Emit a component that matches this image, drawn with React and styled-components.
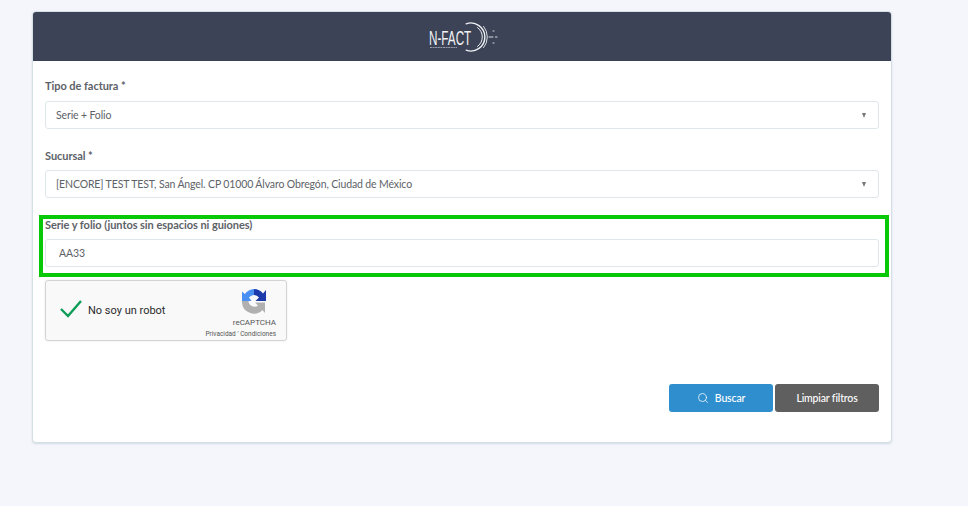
import React from "react";
import styled, { createGlobalStyle } from "styled-components";
import { Search } from "lucide-react";

const GlobalStyle = createGlobalStyle`
  html, body {
    margin: 0;
    padding: 0;
    height: 100%;
    background: #f5f6fb;
    font-family: "Lato", "Liberation Sans", sans-serif;
  }
`;

const Page = styled.div`
  width: 968px;
  height: 506px;
  padding: 11px 0 0 32px;
  box-sizing: border-box;
  overflow: hidden;
`;

const Card = styled.div`
  width: 860px;
  height: 432px;
  box-sizing: border-box;
  background: #fff;
  border: 1px solid #d5dfe6;
  border-radius: 4px;
  box-shadow: 0 1px 2px rgba(140, 170, 180, 0.35);
  overflow: hidden;
`;

const Header = styled.div`
  height: 49px;
  background: #3c4356;
  display: flex;
  align-items: center;
  justify-content: center;
`;

const Logo = styled.div`
  position: relative;
  width: 72px;
  height: 36px;
  margin-left: 3px;
`;

const LogoText = styled.span`
  position: absolute;
  left: 1px;
  top: 11px;
  color: #f1f2f4;
  font-family: "Liberation Sans", sans-serif;
  font-size: 19.5px;
  line-height: 16px;
  transform: scaleX(0.6);
  transform-origin: left center;
  white-space: nowrap;
`;

const LogoArcs = styled.svg`
  position: absolute;
  left: 0;
  top: 0;
`;

const Body = styled.div`
  padding: 17px 12px 0;
`;

const Field = styled.div`
  position: relative;
  margin-bottom: ${(p) => p.$gap}px;
`;

const Label = styled.div`
  color: #5d6268;
  font-size: 11px;
  font-weight: 700;
  line-height: 16px;
  letter-spacing: -0.05px;
  margin-bottom: ${(p) => p.$gap}px;
`;

const Control = styled.div`
  height: 28px;
  box-sizing: border-box;
  border: 1px solid #dde7ea;
  border-radius: 3px;
  background: #fff;
  display: flex;
  align-items: center;
  justify-content: space-between;
  padding: 0 12px 1px ${(p) => (p.$select ? "10px" : "13px")};
  color: #5d6268;
  font-size: 10.5px;
  letter-spacing: -0.13px;
`;

const Caret = styled.span`
  width: 0;
  height: 0;
  border-left: 2.5px solid transparent;
  border-right: 2.5px solid transparent;
  border-top: 5px solid #777;
  margin-top: 2px;
`;

const Highlight = styled.div`
  position: absolute;
  left: -6px;
  right: -10px;
  top: -2px;
  bottom: -10px;
  border: 4px solid #08c808;
  pointer-events: none;
`;

const Captcha = styled.div`
  width: 242px;
  height: 61px;
  box-sizing: border-box;
  background: #f9f9f9;
  border: 1px solid #d3d3d3;
  border-radius: 3px;
  box-shadow: 0 0 3px rgba(0, 0, 0, 0.08);
  display: flex;
  align-items: center;
  padding: 0 10px 0 13px;
`;

const CaptchaCheck = styled.svg`
  margin-bottom: 3px;
`;

const CaptchaLabel = styled.span`
  flex: 1;
  margin-left: 5px;
  color: #2b2b2b;
  font-family: "Roboto", "Liberation Sans", sans-serif;
  font-size: 11px;
`;

const CaptchaBrand = styled.div`
  display: flex;
  flex-direction: column;
  align-items: flex-end;
  margin-top: 6px;
  color: #555;
  font-family: "Roboto", "Liberation Sans", sans-serif;
`;

const BrandIcon = styled.svg`
  margin-right: 10px;
`;

const BrandName = styled.span`
  font-size: 8px;
  line-height: 10px;
  margin-top: 4px;
`;

const BrandLinks = styled.span`
  font-size: 6.5px;
  line-height: 9px;
  margin-top: 2px;
  white-space: nowrap;
`;

const Actions = styled.div`
  display: flex;
  justify-content: flex-end;
  gap: 2px;
  margin-top: 43px;
`;

const Button = styled.button`
  width: 104px;
  height: 28px;
  border: 0;
  border-radius: 3px;
  padding: 0 0 1px;
  background: ${(p) => p.$bg};
  color: #fff;
  font-family: inherit;
  font-size: 10.5px;
  font-weight: 500;
  letter-spacing: -0.15px;
  display: flex;
  align-items: center;
  justify-content: center;
  gap: 6px;
`;

function LogoMark() {
  return (
    <Logo>
      <LogoArcs width="72" height="36" viewBox="0 0 72 36" fill="none" stroke="#eef0f3" strokeLinecap="round">
        <path d="M38.2 4.8 A14 14 0 1 1 38.2 31.2" strokeWidth="1.4" />
        <path d="M49.6 8.6 A11.5 11.5 0 0 1 49.6 27.4" strokeWidth="1" />
        <path d="M55.6 7.4 A16.5 16.5 0 0 1 55.6 28.6" strokeWidth="0.9" />
        <path d="M61 18 H65 M67.5 18 H69 M65 12 H66 M65 24 H66" strokeWidth="0.9" />
        {/* strapline under the wordmark, too small to read in the logo */}
        <path d="M2 28.5 H29" stroke="#9a9eaa" strokeWidth="1.2" strokeLinecap="butt" strokeDasharray="2 0.6" />
      </LogoArcs>
      <LogoText>N-FACT</LogoText>
    </Logo>
  );
}

function RecaptchaIcon() {
  return (
    <BrandIcon width="24" height="26" viewBox="0 0 24 26" fill="none">
      <path d="M12 1 L12 7 A6 6 0 0 0 7 9.5 L9.5 13 L0 13 L0 3.5 L2.8 6 A12 12 0 0 1 12 1 Z" fill="#4a90f2" />
      <path d="M12 1 A12 12 0 0 1 21 5.5 L24 2 L24 13 L13.5 13 L17 9.5 A6 6 0 0 0 12 7 Z" fill="#1c3aa9" />
      <path d="M0 13 L6.5 13 A6 6 0 0 0 16 17.5 L13 14.5 L23 14.5 L23 25 L20.5 22 A12 12 0 0 1 0 13 Z" fill="#b0b0b0" />
    </BrandIcon>
  );
}

export default function App() {
  return (
    <>
      <GlobalStyle />
      <Page>
        <Card>
          <Header>
            <LogoMark />
          </Header>
          <Body>
            <Field $gap={19}>
              <Label $gap={7}>Tipo de factura *</Label>
              <Control $select>
                Serie + Folio
                <Caret />
              </Control>
            </Field>
            <Field $gap={19}>
              <Label $gap={6}>Sucursal *</Label>
              <Control $select>
                [ENCORE] TEST TEST, San Ángel. CP 01000 Álvaro Obregón, Ciudad de México
                <Caret />
              </Control>
            </Field>
            <Field $gap={13}>
              <Label $gap={6}>Serie y folio (juntos sin espacios ni guiones)</Label>
              <Control>AA33</Control>
              <Highlight />
            </Field>
            <Captcha>
              <CaptchaCheck width="24" height="20" viewBox="0 0 24 20" fill="none">
                <path d="M2 10 L9 17 L22 2" stroke="#0f9d58" strokeWidth="2.4" />
              </CaptchaCheck>
              <CaptchaLabel>No soy un robot</CaptchaLabel>
              <CaptchaBrand>
                <RecaptchaIcon />
                <BrandName>reCAPTCHA</BrandName>
                <BrandLinks>Privacidad ' Condiciones</BrandLinks>
              </CaptchaBrand>
            </Captcha>
            <Actions>
              <Button $bg="#2f8fce">
                <Search size={12} strokeWidth={1.5} />
                Buscar
              </Button>
              <Button $bg="#5f5f5f">Limpiar filtros</Button>
            </Actions>
          </Body>
        </Card>
      </Page>
    </>
  );
}
